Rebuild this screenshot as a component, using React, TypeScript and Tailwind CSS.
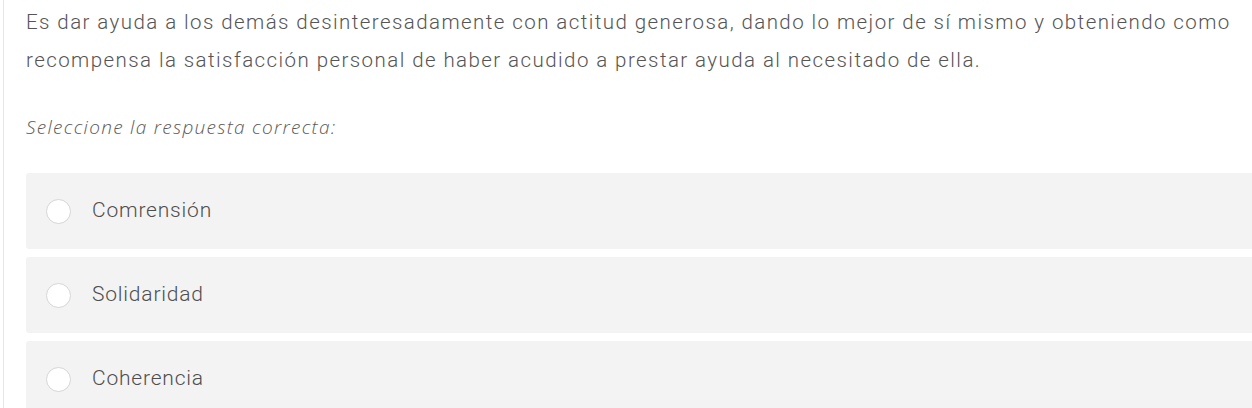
const options = ['Comrensión', 'Solidaridad', 'Coherencia'];

export default function App() {
    return <div className="min-h-screen bg-white">
        <div className="ml-[3px] border-l border-[#e6e6e6] pl-[22px] pt-[3px] min-h-[408px]">
            <p className="text-[20.5px] leading-[38px] tracking-[1.43px] text-[#555555] pr-1" style={{ fontFamily: 'Roboto, sans-serif', fontWeight: 300 }}>
                Es dar ayuda a los demás desinteresadamente con actitud generosa, dando lo mejor de sí mismo y obteniendo como recompensa la satisfacción personal de haber acudido a prestar ayuda al necesitado de ella.
            </p>
            <p className="mt-[34px] leading-[28px] text-[19px] tracking-[1.3px] italic text-[#5a5a5a]" style={{ fontFamily: '"Open Sans", sans-serif', fontWeight: 300 }}>
                Seleccione la respuesta correcta:
            </p>
            <div className="mt-[32px] flex flex-col gap-[8px]">
                {options.map((opt) => (
                    <div key={opt} className="h-[76px] flex items-center bg-[#f3f3f3] rounded-l-[3px] pl-[20px]">
                        <span className="w-[25px] h-[25px] rounded-full bg-white border border-[#d6d6d6]"></span>
                        <span className="ml-[21px] text-[21px] tracking-[0.8px] text-[#4e4e4e]" style={{ fontFamily: 'Roboto, sans-serif', fontWeight: 300 }}>{opt}</span>
                    </div>
                ))}
            </div>
        </div>
    </div>;
}
